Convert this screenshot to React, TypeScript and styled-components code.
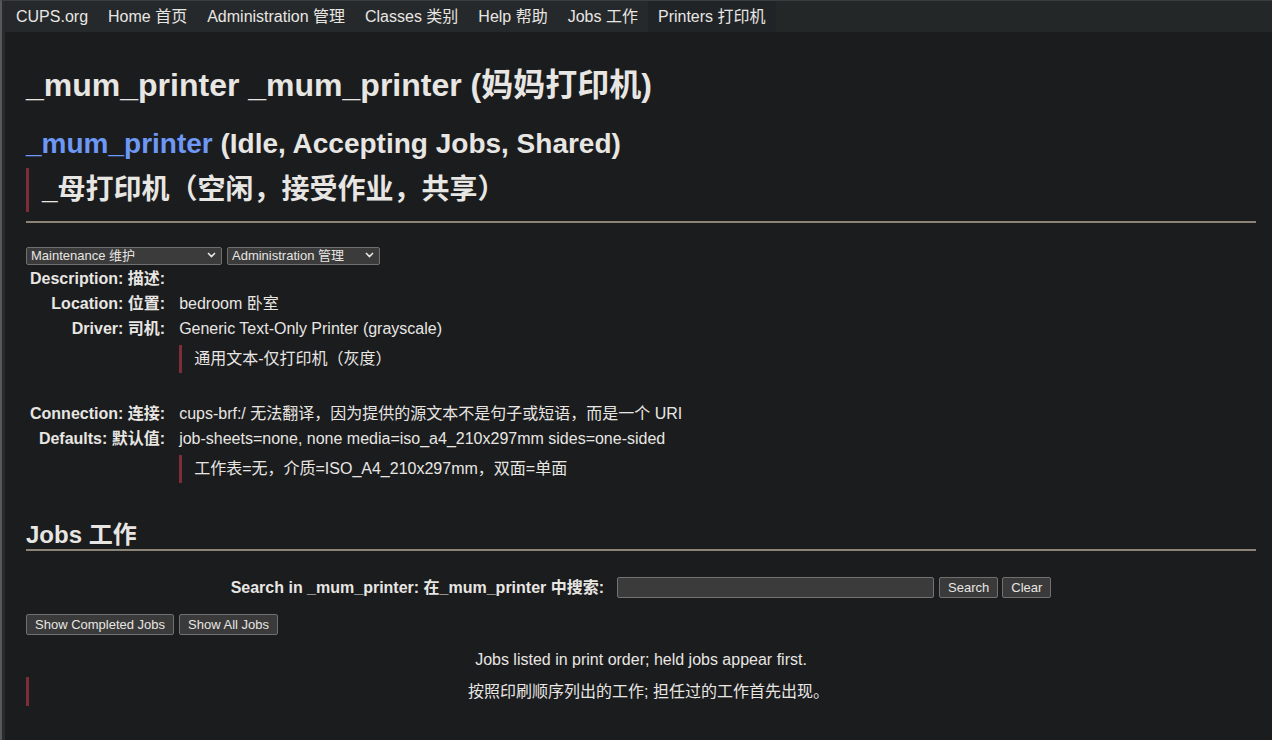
import React from 'react';
import styled, { createGlobalStyle } from 'styled-components';

const GlobalStyle = createGlobalStyle`
  html, body {
    margin: 0;
    padding: 0;
    background: #1b1c1e;
  }
  body {
    font-family: "Liberation Sans", "Noto Sans CJK SC", Arial, sans-serif;
    font-size: 16px;
    line-height: 18px;
    color: #e8e6e3;
  }
  * { box-sizing: border-box; }
`;

const Window = styled.div`
  min-height: 100vh;
  border-left: 2px solid #575859;
  border-top: 1px solid #3a3c3e;
  padding-left: 3px;
  background: #292a2c;
`;

const Page = styled.div`
  min-height: calc(100vh - 1px);
  background: #1b1c1e;
`;

const NavBar = styled.nav`
  display: flex;
  height: 31px;
  padding-left: 1px;
  background: #232728;
`;

const NavLink = styled.a<{ $active?: boolean }>`
  display: block;
  padding: 0 10px;
  line-height: 31px;
  font-size: 16px;
  color: #e8e6e3;
  text-decoration: none;
  background: ${(p) => (p.$active ? '#202427' : '#26292b')};
`;

const Main = styled.main`
  padding: 35px 16px 40px 21px;
`;

const Title = styled.h1`
  margin: 0;
  font-size: 32px;
  line-height: 37px;
  font-weight: bold;
`;

const Subtitle = styled.h2<{ $size?: number }>`
  margin: 0;
  font-size: ${(p) => p.$size ?? 28}px;
  line-height: ${(p) => Math.round((p.$size ?? 28) * 1.15)}px;
  font-weight: bold;
`;

const PrinterLink = styled.a`
  color: #6e98f5;
  text-decoration: none;
`;

const Quote = styled.blockquote<{ $pad?: number; $center?: boolean }>`
  margin: 0;
  border-left: 3px solid #7e2c38;
  padding: ${(p) => p.$pad ?? 5}px 0 ${(p) => p.$pad ?? 5}px 12px;
  line-height: 18px;
  text-align: ${(p) => (p.$center ? 'center' : 'left')};
`;

const Rule = styled.hr`
  margin: 0;
  border: 0;
  height: 2px;
  background: #8c8377;
`;

const Controls = styled.div`
  display: flex;
  gap: 5px;
  margin-top: 23px;
`;

const SelectBox = styled.div<{ $width: number }>`
  position: relative;
  width: ${(p) => p.$width}px;
  height: 18px;

  svg {
    position: absolute;
    right: 6px;
    top: 6px;
    pointer-events: none;
  }
`;

const Select = styled.select`
  appearance: none;
  width: 100%;
  height: 18px;
  margin: 0;
  padding: 0 16px 0 4px;
  font-family: "Liberation Sans", "Noto Sans CJK SC", Arial, sans-serif;
  font-size: 13px;
  color: #e8e6e3;
  background: #3b3b3b;
  border: 1px solid #6f6f6f;
  border-radius: 2px;
`;

const InfoGrid = styled.div`
  display: grid;
  grid-template-columns: max-content 1fr;
  column-gap: 14px;
  margin-top: 2px;
  padding-left: 4px;
`;

const Label = styled.div`
  padding: 3.5px 0;
  text-align: right;
  font-weight: bold;
`;

const Value = styled.div`
  padding: 3.5px 0;
`;

const ValueQuote = styled(Quote)`
  margin: 7px 0 25px;
`;

const JobsHeader = styled.div`
  margin-top: 10px;
`;

const SearchForm = styled.form`
  display: flex;
  justify-content: center;
  align-items: center;
  margin-top: 26px;
`;

const SearchLabel = styled.label`
  font-weight: bold;
  line-height: 18px;
  margin-right: 13px;
`;

const TextInput = styled.input`
  width: 317px;
  height: 21px;
  margin: 0 5px 0 0;
  background: #3b3b3b;
  border: 1px solid #737373;
  border-radius: 2px;
  color: #e8e6e3;
`;

const Button = styled.button`
  height: 21px;
  margin: 0;
  padding: 0 8px;
  font-family: "Liberation Sans", Arial, sans-serif;
  font-size: 13px;
  line-height: 19px;
  color: #e8e6e3;
  background: #3a3a3a;
  border: 1px solid #707070;
  border-radius: 2px;
`;

const ButtonRow = styled.div`
  display: flex;
  gap: 5px;
  margin-top: 16px;
`;

const Note = styled.p`
  margin: 16px 0 8px;
  text-align: center;
`;

const Chevron = () => (
  <svg width="9" height="6" viewBox="0 0 9 6">
    <path d="M1 1l3.5 3.5L8 1" fill="none" stroke="#e8e6e3" strokeWidth="1.6" />
  </svg>
);

const navItems = [
  'Home 首页',
  'Administration 管理',
  'Classes 类别',
  'Help 帮助',
  'Jobs 工作',
];

const App: React.FC = () => {
  return (
    <>
      <GlobalStyle />
      <Window>
        <Page>
          <NavBar>
            <NavLink href="#">CUPS.org</NavLink>
            {navItems.map((item) => (
              <NavLink key={item} href="#">{item}</NavLink>
            ))}
            <NavLink $active href="#">Printers 打印机</NavLink>
          </NavBar>
          <Main>
            <Title>_mum_printer _mum_printer (妈妈打印机)</Title>
            <Subtitle style={{ marginTop: 24 }}>
              <PrinterLink href="#">_mum_printer</PrinterLink> (Idle, Accepting Jobs, Shared)
            </Subtitle>
            <Quote $pad={6} style={{ marginTop: 8, marginBottom: 9, paddingLeft: 13 }}>
              <Subtitle>_母打印机（空闲，接受作业，共享）</Subtitle>
            </Quote>
            <Rule />

            <Controls>
              <SelectBox $width={196}>
                <Select defaultValue="m">
                  <option value="m">Maintenance 维护</option>
                </Select>
                <Chevron />
              </SelectBox>
              <SelectBox $width={153}>
                <Select defaultValue="a">
                  <option value="a">Administration 管理</option>
                </Select>
                <Chevron />
              </SelectBox>
            </Controls>

            <InfoGrid>
              <Label>Description: 描述:</Label>
              <Value />
              <Label>Location: 位置:</Label>
              <Value>bedroom 卧室</Value>
              <Label>Driver: 司机:</Label>
              <Value>
                Generic Text-Only Printer (grayscale)
                <ValueQuote>通用文本-仅打印机（灰度）</ValueQuote>
              </Value>
              <Label>Connection: 连接:</Label>
              <Value>cups-brf:/ 无法翻译，因为提供的源文本不是句子或短语，而是一个 URI</Value>
              <Label>Defaults: 默认值:</Label>
              <Value>
                job-sheets=none, none media=iso_a4_210x297mm sides=one-sided
                <ValueQuote>工作表=无，介质=ISO_A4_210x297mm，双面=单面</ValueQuote>
              </Value>
            </InfoGrid>

            <JobsHeader>
              <Subtitle $size={24}>Jobs 工作</Subtitle>
              <Rule />
            </JobsHeader>

            <SearchForm onSubmit={(e) => e.preventDefault()}>
              <SearchLabel>Search in _mum_printer: 在_mum_printer 中搜索:</SearchLabel>
              <TextInput type="search" />
              <Button type="submit">Search</Button>
              <Button type="button" style={{ marginLeft: 4 }}>Clear</Button>
            </SearchForm>

            <ButtonRow>
              <Button>Show Completed Jobs</Button>
              <Button>Show All Jobs</Button>
            </ButtonRow>

            <Note>Jobs listed in print order; held jobs appear first.</Note>
            <Quote $center style={{ paddingTop: 5.5, paddingBottom: 5.5 }}>
              按照印刷顺序列出的工作; 担任过的工作首先出现。
            </Quote>
          </Main>
        </Page>
      </Window>
    </>
  );
};

export default App;
